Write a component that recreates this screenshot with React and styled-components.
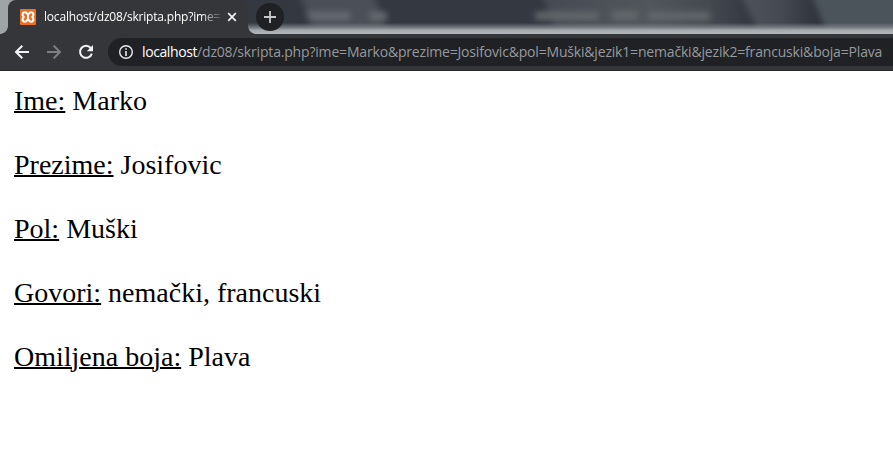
import React from 'react';
import styled, { createGlobalStyle } from 'styled-components';

const GlobalStyle = createGlobalStyle`
  * { box-sizing: border-box; }
  body { margin: 0; background: #fff; overflow: hidden; }
`;

const Window = styled.div`
  display: flex;
  flex-direction: column;
  width: 893px;
  height: 451px;
  background: #fff;
`;

const TabStrip = styled.div`
  position: relative;
  display: flex;
  align-items: center;
  height: 34px;
  padding-left: 8px;
  overflow: hidden;
`;

const Backdrop = styled.svg`
  position: absolute;
  inset: 0;
`;

const Tab = styled.div`
  position: relative;
  display: flex;
  align-items: center;
  width: 240px;
  height: 34px;
  padding-left: 12px;
  background: #35363a;
  border-radius: 8px 8px 0 0;

  &::before,
  &::after {
    content: '';
    position: absolute;
    bottom: 0;
    width: 8px;
    height: 8px;
  }
  &::before {
    left: -8px;
    background: radial-gradient(circle at 0 0, transparent 7.5px, #35363a 8.2px);
  }
  &::after {
    right: -8px;
    background: radial-gradient(circle at 100% 0, transparent 7.5px, #35363a 8.2px);
  }
`;

const TabTitle = styled.span`
  width: 176px;
  margin-left: 8px;
  white-space: nowrap;
  font: 12px/20px 'Open Sans', 'Noto Sans', sans-serif;
  letter-spacing: -0.19px;
  color: #fff;
  mask-image: linear-gradient(to right, #000 156px, transparent 180px);
`;

const CloseIcon = styled.svg`
  margin-left: 7px;
`;

const NewTab = styled.div`
  position: relative;
  display: flex;
  align-items: center;
  justify-content: center;
  width: 28px;
  height: 28px;
  margin-left: 8px;
  border-radius: 50%;
  background: #202124;
`;

const Toolbar = styled.div`
  display: flex;
  align-items: center;
  height: 37px;
  padding-left: 14px;
  background: #35363a;
  border-bottom: 1px solid #292a2d;
`;

const NavIcon = styled.svg`
  flex: none;
  margin-right: 16px;
`;

const AddressBar = styled.div`
  display: flex;
  align-items: center;
  flex: 1;
  height: 28px;
  margin-left: -2px;
  padding-left: 10px;
  border-radius: 14px 0 0 14px;
  background: #202124;
`;

const Url = styled.span`
  margin-left: 8px;
  white-space: nowrap;
  font: 14px/26px 'Open Sans', 'Noto Sans', sans-serif;
  letter-spacing: -0.18px;
  color: #969a9f;
`;

const Host = styled.span`
  letter-spacing: -0.4px;
  color: #fff;
`;

const Page = styled.main`
  padding: 14px;
  font: 28px/32px 'Liberation Serif', serif;
  color: #000;
`;

const Row = styled.div`
  height: 64px;
`;

const Label = styled.u`
  text-decoration-thickness: 2px;
`;

const fields = [
  ['Ime:', 'Marko'],
  ['Prezime:', 'Josifovic'],
  ['Pol:', 'Muški'],
  ['Govori:', 'nemački, francuski'],
  ['Omiljena boja:', 'Plava'],
];

function StripBackdrop() {
  return (
    <Backdrop width="893" height="34" viewBox="0 0 893 34">
      <defs>
        <linearGradient id="edge" x1="0" y1="0" x2="0" y2="1">
          <stop offset="0" stopColor="#80868b" stopOpacity="0" />
          <stop offset="0.3" stopColor="#777c82" stopOpacity="0.7" />
          <stop offset="0.65" stopColor="#a3a9ad" />
          <stop offset="1" stopColor="#b0b6ba" />
        </linearGradient>
        <linearGradient id="panel">
          <stop offset="0" stopColor="#464b53" />
          <stop offset="0.5" stopColor="#51565d" />
          <stop offset="0.75" stopColor="#454950" />
          <stop offset="1" stopColor="#30343d" />
        </linearGradient>
        <linearGradient id="band">
          <stop offset="0" stopColor="#50555c" />
          <stop offset="0.45" stopColor="#454951" />
          <stop offset="0.8" stopColor="#30343d" />
        </linearGradient>
        <filter id="soft" x="-10%" y="-50%" width="120%" height="200%" colorInterpolationFilters="sRGB">
          <feGaussianBlur stdDeviation="3" />
        </filter>
      </defs>
      <rect width="893" height="34" fill="#333841" />
      <g filter="url(#soft)">
        <path d="M298 -10H372L392 44H318Z" fill="#4b4f57" />
        <path d="M540 -10H735L762 44H560Z" fill="url(#panel)" />
        <path d="M738 -10H812L835 44H765Z" fill="url(#band)" />
        <path d="M809 -10H910V44H832Z" fill="#4c545b" />
        <path d="M306 12H350V20H309ZM369 12H387V20H371Z" fill="#676b72" />
        <path d="M535 12H598V20H535ZM612 11H638V20H612ZM648 12H710V20H648Z" fill="#63686c" />
      </g>
      <rect y="23" width="893" height="11" fill="url(#edge)" />
      <rect width="20" height="34" fill="#9fa4a6" />
    </Backdrop>
  );
}

function Favicon() {
  return (
    <svg width="16" height="16" viewBox="0 0 16 16" fill="none">
      <rect width="16" height="16" rx="1" fill="#ee6f22" />
      <path
        d="M8 5.7C7.2 5.7 7.2 3.2 5 3.2C2 3.2 2 6.5 3.8 8C2 9.5 2 12.8 5 12.8C7.2 12.8 7.2 10.1 8 10.1C8.8 10.1 8.8 12.8 11 12.8C14 12.8 14 9.5 12.2 8C14 6.5 14 3.2 11 3.2C8.8 3.2 8.8 5.7 8 5.7Z"
        stroke="#fff"
        strokeWidth="2"
        strokeLinejoin="round"
      />
      <path d="M8 5.5V10.3" stroke="#fff" strokeWidth="2" />
    </svg>
  );
}

export default function App() {
  return (
    <>
      <GlobalStyle />
      <Window>
        <TabStrip>
          <StripBackdrop />
          <Tab>
            <Favicon />
            <TabTitle>localhost/dz08/skripta.php?ime=</TabTitle>
            <CloseIcon width="10" height="10" viewBox="0 0 10 10">
              <path d="M1.2 1.2L8.8 8.8M8.8 1.2L1.2 8.8" stroke="#f1f3f4" strokeWidth="1.7" />
            </CloseIcon>
          </Tab>
          <NewTab>
            <svg width="12" height="12" viewBox="0 0 12 12">
              <path d="M6 0V12M0 6H12" stroke="#c6c9cc" strokeWidth="1.8" />
            </svg>
          </NewTab>
        </TabStrip>
        <Toolbar>
          <NavIcon width="16" height="16" viewBox="0 0 16 16">
            <path d="M15 8H2.5M8.3 1.7L2 8L8.3 14.3" fill="none" stroke="#f1f3f4" strokeWidth="2" />
          </NavIcon>
          <NavIcon width="16" height="16" viewBox="0 0 16 16">
            <path d="M1 8H13.5M7.7 1.7L14 8L7.7 14.3" fill="none" stroke="#7d7f83" strokeWidth="2" />
          </NavIcon>
          <NavIcon width="16" height="16" viewBox="0 0 16 16">
            <path d="M12.7 4A6 6 0 1 0 13.8 9.6" fill="none" stroke="#f1f3f4" strokeWidth="2" />
            <path d="M15 1V7.2H8.8Z" fill="#f1f3f4" />
          </NavIcon>
          <AddressBar>
            <svg width="16" height="16" viewBox="0 0 16 16">
              <circle cx="8" cy="8" r="6.3" fill="none" stroke="#e8eaed" strokeWidth="1.4" />
              <path d="M8 7V12M8 4.2V5.8" stroke="#e8eaed" strokeWidth="1.6" />
            </svg>
            <Url>
              <Host>localhost</Host>
              /dz08/skripta.php?ime=Marko&amp;prezime=Josifovic&amp;pol=Muški&amp;jezik1=nemački&amp;jezik2=francuski&amp;boja=Plava
            </Url>
          </AddressBar>
        </Toolbar>
        <Page>
          {fields.map(([label, value]) => (
            <Row key={label}>
              <Label>{label}</Label> {value}
            </Row>
          ))}
        </Page>
      </Window>
    </>
  );
}
